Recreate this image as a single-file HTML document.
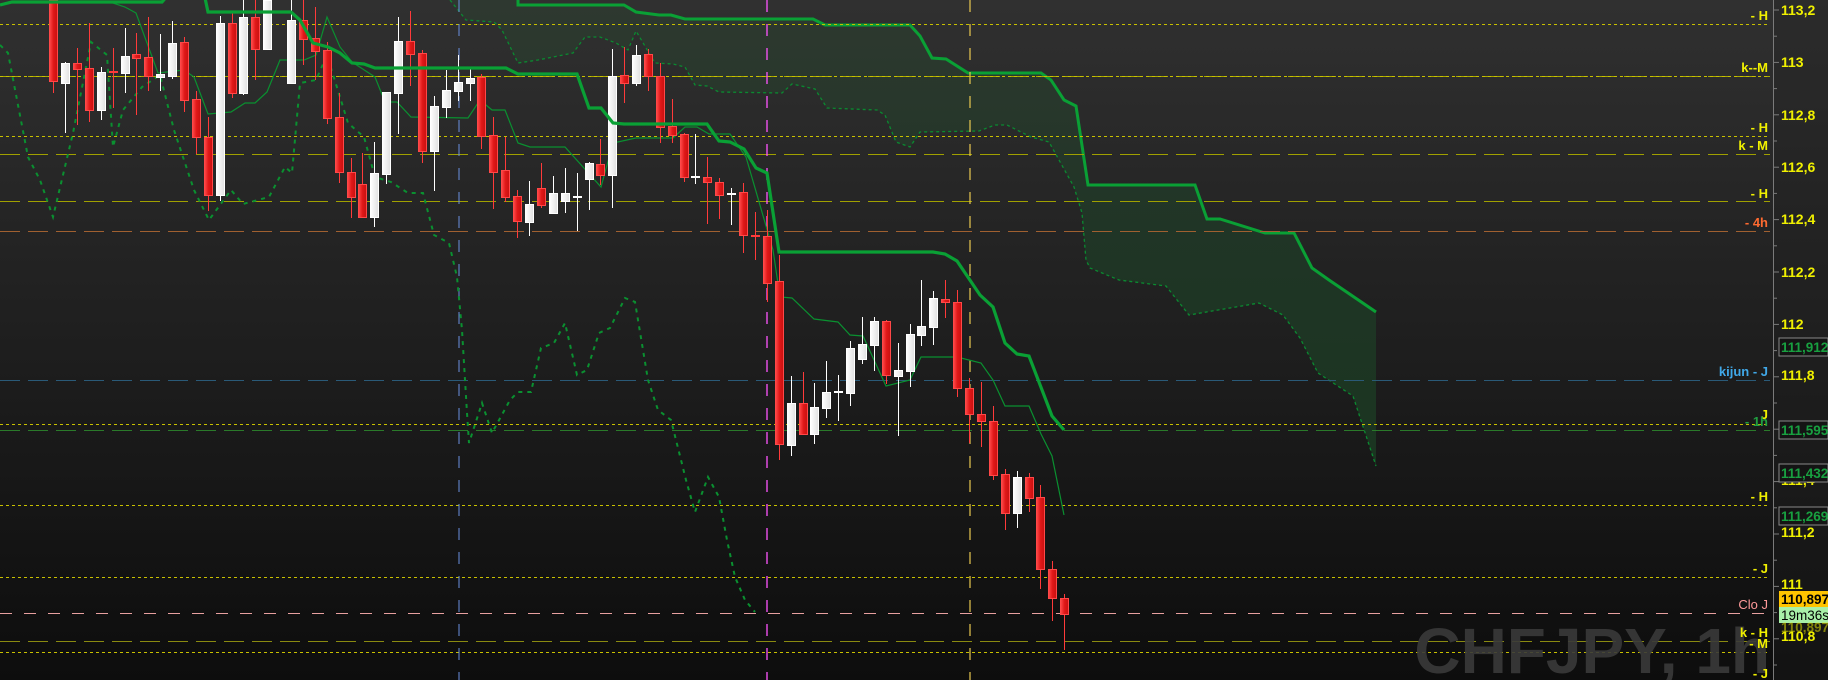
<!DOCTYPE html>
<html><head><meta charset="utf-8"><style>
html,body{margin:0;padding:0;background:#161616;width:1828px;height:680px;overflow:hidden;}
svg{display:block;overflow:hidden;}
text{font-family:"Liberation Sans",Arial,sans-serif;}
</style></head><body>
<svg id="s" width="1828" height="680" viewBox="0 0 1828 680" xmlns="http://www.w3.org/2000/svg">
<defs>
<linearGradient id="bg" x1="0" y1="0" x2="0" y2="1"><stop offset="0" stop-color="#303030"/><stop offset="1" stop-color="#0d0d0d"/></linearGradient>
<linearGradient id="cl" x1="0" y1="0" x2="0" y2="1"><stop offset="0" stop-color="#2e3a30"/><stop offset="0.5" stop-color="#1f3826"/><stop offset="1" stop-color="#1b3a22"/></linearGradient>
<linearGradient id="rd" x1="0" y1="0" x2="1" y2="0"><stop offset="0" stop-color="#ff4a4a"/><stop offset="0.5" stop-color="#e01818"/><stop offset="1" stop-color="#c81010"/></linearGradient>
<linearGradient id="wh" x1="0" y1="0" x2="1" y2="0"><stop offset="0" stop-color="#ffffff"/><stop offset="1" stop-color="#e0e0e0"/></linearGradient>
<clipPath id="clip"><rect width="1828" height="680"/></clipPath>
</defs>
<g clip-path="url(#clip)">
<rect width="1828" height="680" fill="url(#bg)"/>
<path fill="url(#cl)" opacity="0.85" d="M450,0 L518,0 L518,5 L624,5 L636,12 L659,15 L671,15 L685,19 L813,19 L825,25 L910,25 L920,36 L932,58 L946,59 L968,73 L1041,73 L1051,80 L1064,100 L1076,106 L1088,185 L1195,185 L1207,219 L1220,219 L1265,233 L1294,233 L1312,268 L1329,280 L1376,312 L1376,466 L1353,396 L1318,373 L1300,338 L1283,315 L1259,303 L1224,309 L1189,315 L1166,286 L1119,280 L1090,268 L1086,260 L1082,213 L1074,187 L1049,142 L1031,137 L1007,125 L995,125 L979,131 L920,132 L910,147 L896,142 L885,115 L877,110 L827,108 L815,89 L792,84 L782,93 L719,92 L707,86 L695,85 L685,67 L673,64 L655,63 L636,31 L628,50 L616,43 L600,37 L585,37 L573,53 L538,60 L518,63 L502,30 L494,22 L466,20 Z"/>
<path fill="none" stroke="#0a8a30" stroke-width="1.3" stroke-dasharray="3,3" d="M450,0 L466,20 L494,22 L502,30 L518,63 L538,60 L573,53 L585,37 L600,37 L616,43 L628,50 L636,31 L655,63 L673,64 L685,67 L695,85 L707,86 L719,92 L782,93 L792,84 L815,89 L827,108 L877,110 L885,115 L896,142 L910,147 L920,132 L979,131 L995,125 L1007,125 L1031,137 L1049,142 L1074,187 L1082,213 L1086,260 L1090,268 L1119,280 L1166,286 L1189,315 L1224,309 L1259,303 L1283,315 L1300,338 L1318,373 L1353,396 L1376,466"/>
<path fill="none" stroke="#0aa035" stroke-width="3" d="M518,0 L518,5 L624,5 L636,12 L659,15 L671,15 L685,19 L813,19 L825,25 L910,25 L920,36 L932,58 L946,59 L968,73 L1041,73 L1051,80 L1064,100 L1076,106 L1088,185 L1195,185 L1207,219 L1220,219 L1265,233 L1294,233 L1312,268 L1329,280 L1376,312"/>
<g id="hl"></g>
<line x1="459" y1="0" x2="459" y2="680" stroke="#6a90e0" stroke-width="1" stroke-dasharray="12,12"/>
<line x1="767" y1="0" x2="767" y2="680" stroke="#ff55ff" stroke-width="1.3" stroke-dasharray="12,12"/>
<line x1="970" y1="0" x2="970" y2="680" stroke="#e8c850" stroke-width="1.2" stroke-dasharray="12,12"/>
<path fill="none" stroke="#0a9030" stroke-width="2" stroke-dasharray="4,5" d="M0,45 L8,53 L28,157 L40,180 L53,217 L73,133 L91,42 L107,55 L113,147 L123,110 L142,87 L160,75 L174,130 L194,190 L209,220 L231,190 L243,204 L269,197 L285,167 L292,173 L300,83 L316,80 L327,55 L348,123 L364,137 L375,177 L391,182 L408,193 L423,193 L434,235 L449,243 L457,277 L462,330 L467,413 L469,443 L482,403 L492,433 L510,400 L518,392 L531,392 L541,348 L554,343 L565,323 L577,375 L587,370 L599,333 L610,328 L625,298 L635,302 L648,380 L658,410 L671,420 L686,480 L695,512 L708,477 L719,497 L727,540 L735,577 L745,600 L755,612"/>
<path fill="none" stroke="#0a9030" stroke-width="1.2" d="M113,3 L125,7 L136,13 L158,73 L184,70 L194,77 L208,114 L231,112 L245,103 L255,103 L267,92 L280,60 L304,60 L316,55 L327,17 L340,47 L352,62 L375,77 L385,102 L397,102 L411,117 L468,118 L480,100 L492,110 L505,110 L518,143 L530,147 L565,147 L601,187 L613,143 L636,138 L673,138 L685,127 L697,127 L709,134 L730,134 L746,157 L773,250 L780,297 L792,298 L814,319 L838,322 L850,335 L863,336 L886,386 L910,380 L921,357 L957,357 L981,363 L993,380 L1005,406 L1029,406 L1041,434 L1052,456 L1064,515"/>
<g id="cd"></g>
<path fill="none" stroke="#0aa035" stroke-width="3.2" d="M0,5 L12,2 L162,2 L168,-5 M205,-2 L208,12 L291,12 L300,20 L313,43 L328,47 L340,53 L352,63 L364,64 L375,68 L506,68 L518,74 L577,74 L589,108 L601,108 L613,123 L624,124 L707,124 L719,141 L730,142 L744,149 L756,168 L767,173 L779,252 L933,252 L945,254 L957,261 L980,295 L993,307 L1005,343 L1017,354 L1029,356 L1052,416 L1064,430"/>
<rect x="1774" y="0" width="54" height="680" fill="#202020" opacity="0.3"/>
<line x1="1773.5" y1="0" x2="1773.5" y2="680" stroke="#7a7a7a" stroke-width="1"/>
<g id="tk" stroke="#7a7a7a" stroke-width="1"></g>
<g font-weight="bold" font-size="14" fill="#f0f000">
<text x="1781" y="15">113,2</text><text x="1781" y="67">113</text><text x="1781" y="120">112,8</text><text x="1781" y="172">112,6</text><text x="1781" y="224">112,4</text><text x="1781" y="277">112,2</text><text x="1781" y="329">112</text><text x="1781" y="380">111,8</text><text x="1781" y="485">111,4</text><text x="1781" y="537">111,2</text><text x="1781" y="589">111</text><text x="1781" y="641">110,8</text>
</g>
<g font-weight="bold" font-size="13.5">
<rect x="1779" y="338" width="49" height="18" fill="#141414" stroke="#888"/><text x="1781" y="352" fill="#18a040">111,912</text>
<rect x="1779" y="421" width="49" height="18" fill="#141414" stroke="#888"/><text x="1781" y="435" fill="#18a040">111,595</text>
<rect x="1779" y="464" width="49" height="18" fill="#141414" stroke="#888"/><text x="1781" y="478" fill="#18a040">111,432</text>
<rect x="1779" y="507" width="49" height="18" fill="#141414" stroke="#888"/><text x="1781" y="521" fill="#18a040">111,269</text>
<rect x="1779" y="591" width="49" height="16" fill="#ffc400"/><text x="1781" y="604" fill="#000">110,897</text>
<rect x="1779" y="607" width="49" height="16" fill="#a8f0a8"/><text x="1781" y="620" fill="#000" font-weight="normal">19m36s</text>
<text x="1781" y="632" fill="#f0f000" opacity="0.5">110,897</text>
</g>
<text x="1770" y="673" text-anchor="end" font-size="64" font-weight="bold" fill="#3a3a3a" opacity="0.9">CHFJPY, 1h</text>
<g font-weight="bold" font-size="13" fill="#f0f000" text-anchor="end">
<text x="1768" y="20">- H</text><text x="1768" y="72">k--M</text><text x="1768" y="132">- H</text><text x="1768" y="150">k - M</text><text x="1768" y="198">- H</text>
<text x="1768" y="227" fill="#ff6a30">- 4h</text>
<text x="1768" y="376" fill="#40a8e8">kijun - J</text>
<text x="1768" y="419">J</text><text x="1768" y="426" fill="#20a040">- 1h</text>
<text x="1768" y="501">- H</text><text x="1768" y="573">- J</text>
<text x="1768" y="609" fill="#ff9a9a" font-weight="normal">Clo J</text>
<text x="1768" y="637">k - H</text><text x="1768" y="648">- M</text><text x="1768" y="678">- J</text>
</g>
</g>
</svg>
<script>
var NS="http://www.w3.org/2000/svg";
function el(p,t,a){var e=document.createElementNS(NS,t);for(var k in a)e.setAttribute(k,a[k]);p.appendChild(e);return e;}
var hl=document.getElementById('hl');
[[24,"#c8c000","3,3"],[76,"#a8a800","20,8"],[76,"#c8c000","3,3"],[136,"#c8c000","3,3"],[154,"#a0a000","20,8"],[201,"#a0a000","20,8"],[231,"#a06030","20,8"],[380,"#2a5a78","20,8"],[424,"#c8c000","3,3"],[430,"#2a7a2a","20,8"],[505,"#c8c000","3,3"],[577,"#c8c000","3,3"],[613,"#e8a0a0","12,12"],[641,"#8a8a10","20,8"],[652,"#c8c000","3,3"]].forEach(function(h){el(hl,'line',{x1:0,x2:1770,y1:h[0]+.5,y2:h[0]+.5,stroke:h[1],'stroke-width':1,'stroke-dasharray':h[2]});});
var tk=document.getElementById('tk');
for(var i=-1;i<26;i++){var y=10+i*26.2;el(tk,'line',{x1:1773,x2:i%2==0?1779:1777,y1:y,y2:y});}
var C=[[53,'R',0,81,0,93],[65,'W',63,83,62,133],[77,'R',63,69,48,125],[89,'R',68,110,23,122],[101,'W',72,110,67,120],[113,'R',71,73,48,108],[125,'W',56,73,28,93],[136,'R',54,58,33,115],[148,'R',57,76,17,91],[160,'W',74,77,34,91],[172,'W',43,76,21,79],[184,'R',42,100,37,112],[196,'R',99,137,91,154],[208,'R',137,195,117,211],[220,'W',23,195,16,201],[232,'R',23,93,13,98],[243,'W',17,93,0,95],[255,'R',17,49,0,80],[267,'W',0,49,0,50],[291,'W',20,83,0,84],[303,'R',20,39,0,65],[315,'R',38,51,7,80],[327,'R',50,118,42,124],[339,'R',117,172,93,183],[351,'R',172,197,158,218],[362,'R',184,217,153,218],[374,'W',173,217,142,227],[386,'W',92,174,92,184],[398,'W',41,93,17,134],[410,'R',41,54,11,86],[422,'R',53,151,50,163],[434,'W',106,151,96,191],[446,'W',90,107,70,118],[458,'W',82,91,55,101],[470,'W',78,83,69,101],[481,'R',77,136,74,149],[493,'R',135,172,117,209],[505,'R',170,197,137,202],[517,'R',196,221,190,238],[529,'W',204,222,181,236],[541,'R',188,205,163,208],[553,'W',193,213,176,213],[565,'W',193,201,168,213],[577,'W',196,198,173,231],[589,'W',163,179,162,210],[600,'R',164,175,139,185],[612,'W',76,175,49,208],[624,'R',75,83,47,103],[636,'W',55,83,45,86],[648,'R',54,76,49,91],[660,'R',76,127,63,143],[672,'R',126,135,99,143],[684,'R',134,177,133,182],[695,'W',176,178,134,184],[707,'R',177,182,157,224],[719,'R',182,195,178,219],[731,'W',193,195,188,225],[743,'R',192,235,183,253],[755,'R',235,237,212,260],[767,'R',236,283,210,302],[779,'R',281,444,255,460],[791,'W',403,445,376,456],[803,'R',403,434,372,435],[814,'W',407,434,383,444],[826,'W',392,408,361,418],[838,'W',391,393,375,421],[850,'W',348,393,341,406],[862,'W',344,359,317,364],[874,'W',321,345,317,371],[886,'R',321,375,320,384],[898,'W',370,376,343,436],[910,'W',334,371,324,387],[921,'W',326,335,280,346],[933,'W',298,327,291,345],[945,'R',299,302,280,318],[957,'R',302,388,290,397],[969,'R',388,414,378,443],[981,'R',414,421,382,447],[993,'R',421,475,406,480],[1005,'R',474,513,469,530],[1017,'W',477,513,471,528],[1029,'R',477,498,473,512],[1040,'R',497,569,485,589],[1052,'R',569,598,561,621],[1064,'R',598,614,594,650]];
var cd=document.getElementById('cd');
C.forEach(function(c){var r=c[1]=='R';var col=r?'#ff3a3a':'#ffffff';
el(cd,'line',{x1:c[0]+.5,x2:c[0]+.5,y1:c[4],y2:c[5],stroke:col,'stroke-width':1});
var h=Math.max(c[3]-c[2],2);
if(c[3]-c[2]<=2){el(cd,'line',{x1:c[0]-4,x2:c[0]+5,y1:c[2]+1,y2:c[2]+1,stroke:col,'stroke-width':2});}
else el(cd,'rect',{x:c[0]-3.5,y:c[2]+.5,width:8,height:h,fill:r?'url(#rd)':'url(#wh)',stroke:r?'#ff4848':'#ffffff','stroke-width':1});});
</script>
</body></html>
